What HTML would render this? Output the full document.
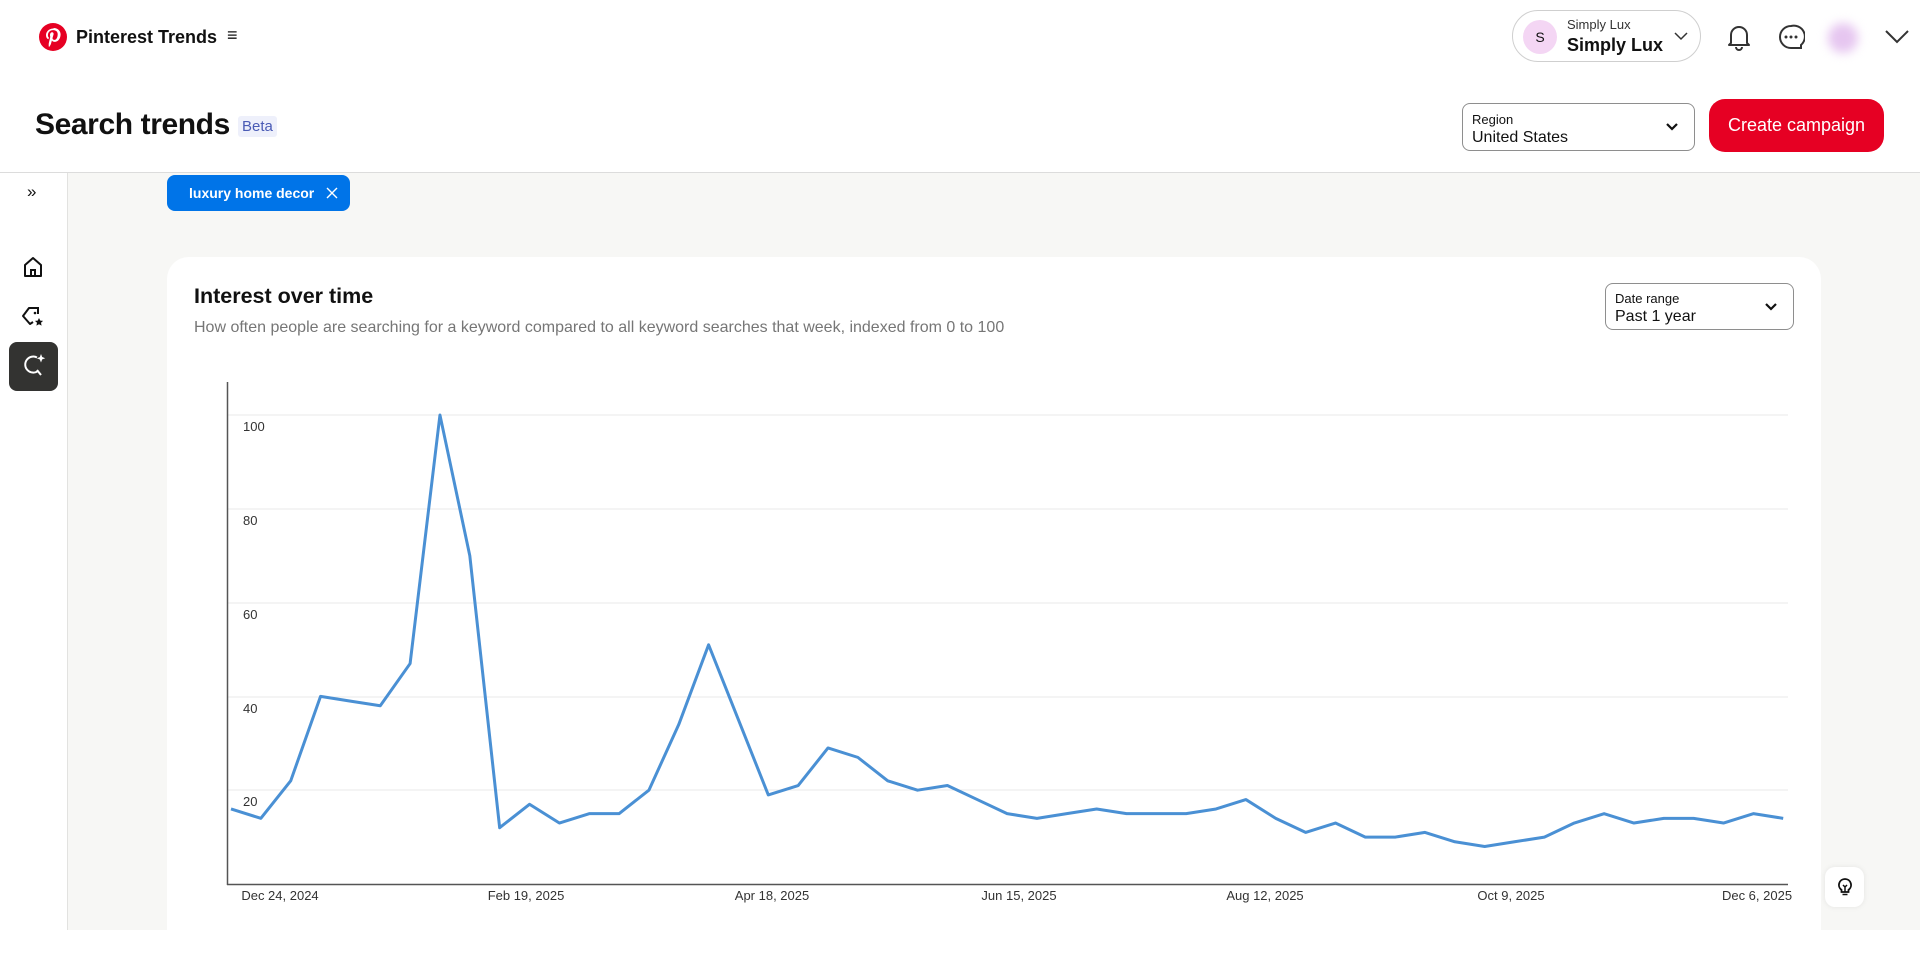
<!DOCTYPE html>
<html><head><meta charset="utf-8">
<style>
*{box-sizing:border-box;margin:0;padding:0}
body{width:1920px;height:930px;overflow:hidden;background:#fff;font-family:"Liberation Sans",sans-serif;color:#111;position:relative}
.abs{position:absolute}
.main{position:absolute;left:67px;top:173px;right:0;bottom:0;background:#f7f7f5;border-left:1px solid #e2e2e0}
.hline{position:absolute;left:0;right:0;top:172px;height:1px;background:#dcdcdc}
.box{border:1px solid #8e8e8e;border-radius:8px;background:#fff}
.lbl{font-size:13px;color:#111}
.val{font-size:16px;color:#111}
.yl{position:absolute;font-size:13px;color:#333;left:243px}
.xl{position:absolute;font-size:13px;color:#333;top:888px;transform:translateX(-50%);white-space:nowrap}
</style></head><body>
<svg class="abs" style="left:39px;top:23px" width="28" height="28" viewBox="0 0 28 28"><circle cx="14" cy="14" r="14" fill="#e60023"/><path d="M14.6 5.5c-5 0-7.6 3.6-7.6 6.6 0 1.8.7 3.4 2.1 4 .2.1.5 0 .5-.3l.2-.9c.1-.3 0-.4-.2-.6-.4-.5-.7-1.2-.7-2.1 0-2.7 2-5.1 5.3-5.1 2.9 0 4.5 1.8 4.5 4.1 0 3.1-1.4 5.7-3.4 5.7-1.1 0-2-.9-1.700-2.100.3-1.4 1-2.9 1-3.9 0-.9-.5-1.6-1.5-1.6-1.2 0-2.1 1.2-2.1 2.8 0 1 .3 1.7.3 1.7l-1.4 5.9c-.4 1.7-.1 3.9 0 4.1 0 .1.2.2.3.1.1-.2 1.5-1.8 1.9-3.5l.8-2.9c.4.7 1.5 1.4 2.7 1.4 3.6 0 6-3.3 6-7.6 0-3.3-2.8-6.3-7-6.300z" fill="#fff"/></svg>
<div class="abs" style="left:76px;top:27px;font-size:18px;font-weight:bold">Pinterest Trends</div>
<div class="abs" style="left:227px;top:25px;font-size:18px">≡</div>

<div class="abs" style="left:1512px;top:10px;width:189px;height:52px;border:1px solid #cfcfcf;border-radius:26px"></div>
<div class="abs" style="left:1523px;top:20px;width:34px;height:34px;border-radius:50%;background:#f4d6f4;font-size:14px;text-align:center;line-height:34px">S</div>
<div class="abs" style="left:1567px;top:17px;font-size:13px;color:#333">Simply Lux</div>
<div class="abs" style="left:1567px;top:35px;font-size:18px;font-weight:bold">Simply Lux</div>
<svg class="abs" style="left:1673px;top:30px" width="16" height="12"><path d="M2 3l6 6 6-6" stroke="#333" stroke-width="1.5" fill="none"/></svg>
<svg class="abs" style="left:1725px;top:22px" width="28" height="30" viewBox="0 0 28 30"><path d="M6 21V13a8 8 0 0116 0v8l2 2H4z" stroke="#333" stroke-width="2" fill="none" stroke-linejoin="round"/><path d="M11 25a3 3 0 006 0" stroke="#333" stroke-width="2" fill="none"/></svg>
<svg class="abs" style="left:1777px;top:23px" width="28" height="28" viewBox="0 0 28 28"><path d="M14 3a11 11 0 100 22h10v-3A11 11 0 0014 3z" stroke="#333" stroke-width="2" fill="none"/><circle cx="9" cy="14" r="1.5" fill="#333"/><circle cx="14" cy="14" r="1.5" fill="#333"/><circle cx="19" cy="14" r="1.5" fill="#333"/></svg>
<div class="abs" style="left:1828px;top:23px;width:30px;height:30px;border-radius:50%;background:#e6c6f0;filter:blur(5px)"></div>
<svg class="abs" style="left:1883px;top:27px" width="28" height="18"><path d="M3 4l11 11 11-11" stroke="#333" stroke-width="2" fill="none"/></svg>

<div class="abs" style="left:35px;top:108px;font-size:30px;font-weight:bold;letter-spacing:-0.4px">Search trends</div>
<div class="abs" style="left:238px;top:116px;background:#eef0fb;color:#4a5bb5;font-size:15px;padding:2px 4px;border-radius:3px">Beta</div>

<div class="abs box" style="left:1462px;top:103px;width:233px;height:48px">
<div class="lbl abs" style="left:9px;top:8px">Region</div>
<div class="val abs" style="left:9px;top:25px">United States</div>
<svg class="abs" style="left:202px;top:18px" width="14" height="10"><path d="M2 2l5 5 5-5" stroke="#111" stroke-width="2.2" fill="none"/></svg>
</div>
<div class="abs" style="left:1709px;top:99px;width:175px;height:53px;background:#e60023;border-radius:16px;color:#fff;font-size:18px;text-align:center;line-height:53px">Create campaign</div>

<div class="hline"></div>
<div class="main"></div>

<div class="abs" style="left:27px;top:182px;font-size:17px">»</div>
<svg class="abs" style="left:22px;top:256px" width="22" height="22" viewBox="0 0 22 22"><path d="M3 9l8-7 8 7v11H3z" stroke="#111" stroke-width="2" fill="none" stroke-linejoin="round"/><path d="M9 20v-6h4v6" stroke="#111" stroke-width="2" fill="none"/></svg>
<svg class="abs" style="left:21px;top:305px" width="24" height="24" viewBox="0 0 24 24"><path d="M12 3H8L2 11l7 8 3-2" stroke="#111" stroke-width="2" fill="none" stroke-linejoin="round"/><path d="M12 3h5v6" stroke="#111" stroke-width="2" fill="none"/><circle cx="14" cy="8" r="1.3" fill="#111"/><path d="M18 13l1.3 2.6 2.8.3-2.1 1.9.6 2.8-2.6-1.4-2.6 1.4.6-2.8-2.1-1.9 2.8-.3z" fill="#111"/></svg>
<div class="abs" style="left:9px;top:342px;width:49px;height:49px;background:#333331;border-radius:8px"></div>
<svg class="abs" style="left:20px;top:352px" width="28" height="28" viewBox="0 0 28 28"><path d="M17 5.5A8 8 0 1018 19" stroke="#fff" stroke-width="2" fill="none"/><path d="M17 18l4 5" stroke="#fff" stroke-width="2"/><path d="M21 2l1.2 3 3 1.2-3 1.2L21 10.5l-1.2-3-3-1.2 3-1.2z" fill="#fff"/></svg>

<div class="abs" style="left:167px;top:175px;width:183px;height:36px;background:#0074e8;border-radius:8px;color:#fff;font-size:14px;font-weight:bold;line-height:36px;padding-left:22px">luxury home decor</div>
<svg class="abs" style="left:326px;top:187px" width="12" height="12"><path d="M1 1l10 10M11 1L1 11" stroke="#fff" stroke-width="1.4"/></svg>

<div class="abs" style="left:167px;top:257px;width:1654px;height:700px;background:#fff;border-radius:22px"></div>
<div class="abs" style="left:194px;top:284px;font-size:21.5px;font-weight:bold">Interest over time</div>
<div class="abs" style="left:194px;top:319px;font-size:16px;color:#767676">How often people are searching for a keyword compared to all keyword searches that week, indexed from 0 to 100</div>
<div class="abs box" style="left:1605px;top:283px;width:189px;height:47px">
<div class="lbl abs" style="left:9px;top:7px">Date range</div>
<div class="val abs" style="left:9px;top:24px">Past 1 year</div>
<svg class="abs" style="left:158px;top:18px" width="14" height="10"><path d="M2 2l5 5 5-5" stroke="#111" stroke-width="2.2" fill="none"/></svg>
</div>

<svg class="abs" style="left:0;top:0" width="1920" height="930">
<g stroke="#e8e8e8" stroke-width="1">
<line x1="228" x2="1788" y1="415" y2="415"/><line x1="228" x2="1788" y1="509" y2="509"/><line x1="228" x2="1788" y1="603" y2="603"/><line x1="228" x2="1788" y1="697" y2="697"/><line x1="228" x2="1788" y1="790" y2="790"/>
</g>
<line x1="227.5" x2="227.5" y1="382" y2="885" stroke="#555" stroke-width="1.5"/>
<line x1="227" x2="1788" y1="884.5" y2="884.5" stroke="#555" stroke-width="1.5"/>
<g transform="translate(231,884) scale(29.85,-4.69)">
<polyline fill="none" stroke="#4a90d4" stroke-width="3" stroke-linejoin="round" vector-effect="non-scaling-stroke" points="0,16 1,14 2,22 3,40 4,39 5,38 6,47 7,100 8,70 9,12 10,17 11,13 12,15 13,15 14,20 15,34 16,51 17,35 18,19 19,21 20,29 21,27 22,22 23,20 24,21 25,18 26,15 27,14 28,15 29,16 30,15 31,15 32,15 33,16 34,18 35,14 36,11 37,13 38,10 39,10 40,11 41,9 42,8 43,9 44,10 45,13 46,15 47,13 48,14 49,14 50,13 51,15 52,14"/>
</g>
</svg>
<div class="yl" style="top:419px">100</div>
<div class="yl" style="top:513px">80</div>
<div class="yl" style="top:607px">60</div>
<div class="yl" style="top:701px">40</div>
<div class="yl" style="top:794px">20</div>
<div class="xl" style="left:280px">Dec 24, 2024</div>
<div class="xl" style="left:526px">Feb 19, 2025</div>
<div class="xl" style="left:772px">Apr 18, 2025</div>
<div class="xl" style="left:1019px">Jun 15, 2025</div>
<div class="xl" style="left:1265px">Aug 12, 2025</div>
<div class="xl" style="left:1511px">Oct 9, 2025</div>
<div class="xl" style="left:1757px">Dec 6, 2025</div>

<div class="abs" style="left:1825px;top:867px;width:39px;height:40px;background:#fff;border-radius:10px;box-shadow:0 0 6px rgba(0,0,0,.08)"></div>
<svg class="abs" style="left:1835px;top:877px" width="20" height="20" viewBox="0 0 20 20"><path d="M10 2a6 6 0 00-3.5 10.9V15h7v-2.1A6 6 0 0010 2z" stroke="#111" stroke-width="1.8" fill="none"/><path d="M7.5 17.5h5M8 8l2 2 2-2M10 10v5" stroke="#111" stroke-width="1.5" fill="none"/></svg>
</body></html>
